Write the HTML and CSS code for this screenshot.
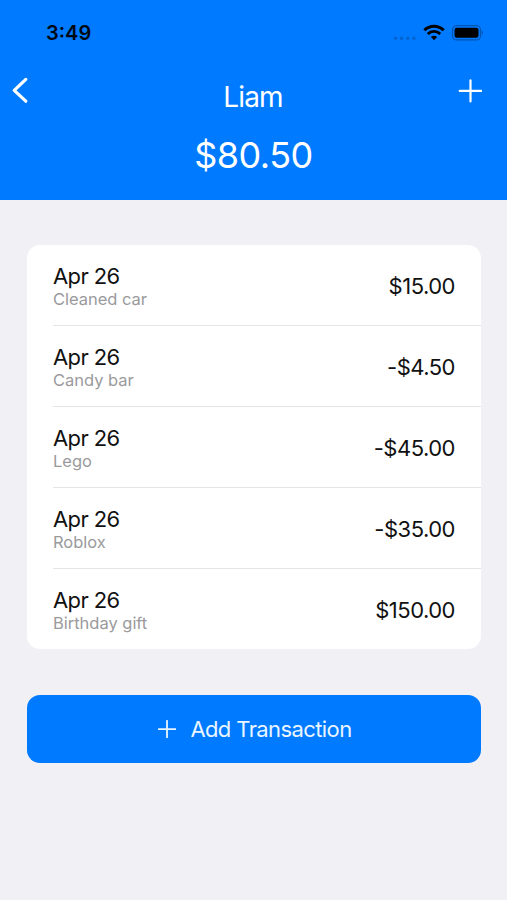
FILE: index.html
```html
<!DOCTYPE html>
<html lang="en">
<head>
<meta charset="utf-8">
<title>Liam</title>
<link rel="stylesheet" href="styles.css">
</head>
<body>
<header class="header">
  <div class="status">
    <span class="time">3:49</span>
    <svg class="status-icons" width="92" height="20" viewBox="0 0 92 20">
      <g fill="#0063cf"><circle cx="4.5" cy="15.2" r="1.7"/><circle cx="10.6" cy="15.2" r="1.7"/><circle cx="16.8" cy="15.2" r="1.7"/><circle cx="22.9" cy="15.2" r="1.7"/></g>
      <g fill="none" stroke="#000" stroke-width="2.9"><path d="M33.3 7.3a13.6 13.6 0 0 1 19.4 0"/><path d="M36.8 11a8.7 8.7 0 0 1 12.4 0"/></g>
      <path d="M43 17.2l-3.1-3.1a4.6 4.6 0 0 1 6.2 0z"/>
      <rect x="61.5" y="2.7" width="28" height="14.2" rx="4" fill="none" stroke="#0055b3" stroke-width="1.2"/>
      <rect x="63.5" y="4.8" width="24" height="10" rx="2.3"/>
      <path d="M90.8 7.8q1.6.6 1.6 2t-1.6 2z" fill="#0055b3"/>
    </svg>
  </div>
  <div class="nav">
    <svg class="back" width="18" height="28" viewBox="0 0 18 28"><path d="M14.8 3.4L3.2 14.3 14.8 25.2"/></svg>
    <h1 class="name">Liam</h1>
    <svg class="add" width="24" height="24" viewBox="0 0 24 24"><path d="M12.5 1.3v21.2M1.7 11.9h21.5"/></svg>
  </div>
  <div class="balance">$80.50</div>
</header>
<main>
  <ul class="list">
    <li class="row"><div class="info"><div class="date">Apr 26</div><div class="note">Cleaned car</div></div><div class="amount">$15.00</div></li>
    <li class="row"><div class="info"><div class="date">Apr 26</div><div class="note">Candy bar</div></div><div class="amount">-$4.50</div></li>
    <li class="row"><div class="info"><div class="date">Apr 26</div><div class="note">Lego</div></div><div class="amount">-$45.00</div></li>
    <li class="row"><div class="info"><div class="date">Apr 26</div><div class="note">Roblox</div></div><div class="amount">-$35.00</div></li>
    <li class="row"><div class="info"><div class="date">Apr 26</div><div class="note">Birthday gift</div></div><div class="amount">$150.00</div></li>
  </ul>
  <button class="button"><svg width="18" height="18" viewBox="0 0 18 18"><path d="M9 .8v16.8M.7 9.2h16.8"/></svg><span>Add Transaction</span></button>
</main>
</body>
</html>
```
FILE: styles.css
```css
* { box-sizing: border-box; }
body { margin: 0; height: 900px; overflow: hidden; background: #f0f0f5; font-family: Inter, "Liberation Sans", sans-serif; color: #111; }
.header { height: 199.5px; background: #007aff; color: #fff; }
.status { display: flex; justify-content: space-between; height: 68px; padding: 21px 24px 0 46px; }
.time { font-size: 20px; line-height: 25px; font-weight: 600; color: #000814; }
.status-icons { margin-top: 2px; }
.nav { display: flex; justify-content: space-between; height: 58px; padding: 8px 25px 0 11px; }
.back { fill: none; stroke: #fff; stroke-width: 3.2; stroke-linecap: round; stroke-linejoin: round; margin-right: 6px; }
.add { fill: none; stroke: #fff; stroke-width: 2.2; stroke-linecap: round; margin-top: 3px; }
.name { margin: 4px 0 0 13px; font-size: 28px; line-height: 35px; font-weight: 400; letter-spacing: -0.9px; }
.balance { margin-top: 7px; font-size: 36px; line-height: 44px; font-weight: 400; letter-spacing: -0.5px; text-align: center; }
main { padding: 45.5px 26px 0 27px; }
.list { margin: 0; padding: 0 0 0 26px; list-style: none; background: #fff; border-radius: 13px; }
.row { display: flex; align-items: center; justify-content: space-between; height: 81px; padding: 1px 26px 0 0; border-bottom: 1px solid #e5e5e7; }
.row:last-child { height: 80px; border-bottom: 0; }
.date { font-size: 22px; line-height: 26px; letter-spacing: -0.6px; }
.note { font-size: 16.5px; line-height: 20px; color: #9a9a9c; letter-spacing: -0.02px; }
.amount { font-size: 22px; line-height: 28px; letter-spacing: -0.5px; }
.button { display: flex; align-items: center; justify-content: center; gap: 14px; width: 100%; height: 68px; margin-top: 46px; padding: 0 0 0 2px; border: 0; border-radius: 13px; background: #007aff; color: #e9f5ff; font: 400 22px/28px Inter, "Liberation Sans", sans-serif; letter-spacing: -0.6px; }
.button svg { fill: none; stroke: #e9f5ff; stroke-width: 1.8; stroke-linecap: round; }
```
